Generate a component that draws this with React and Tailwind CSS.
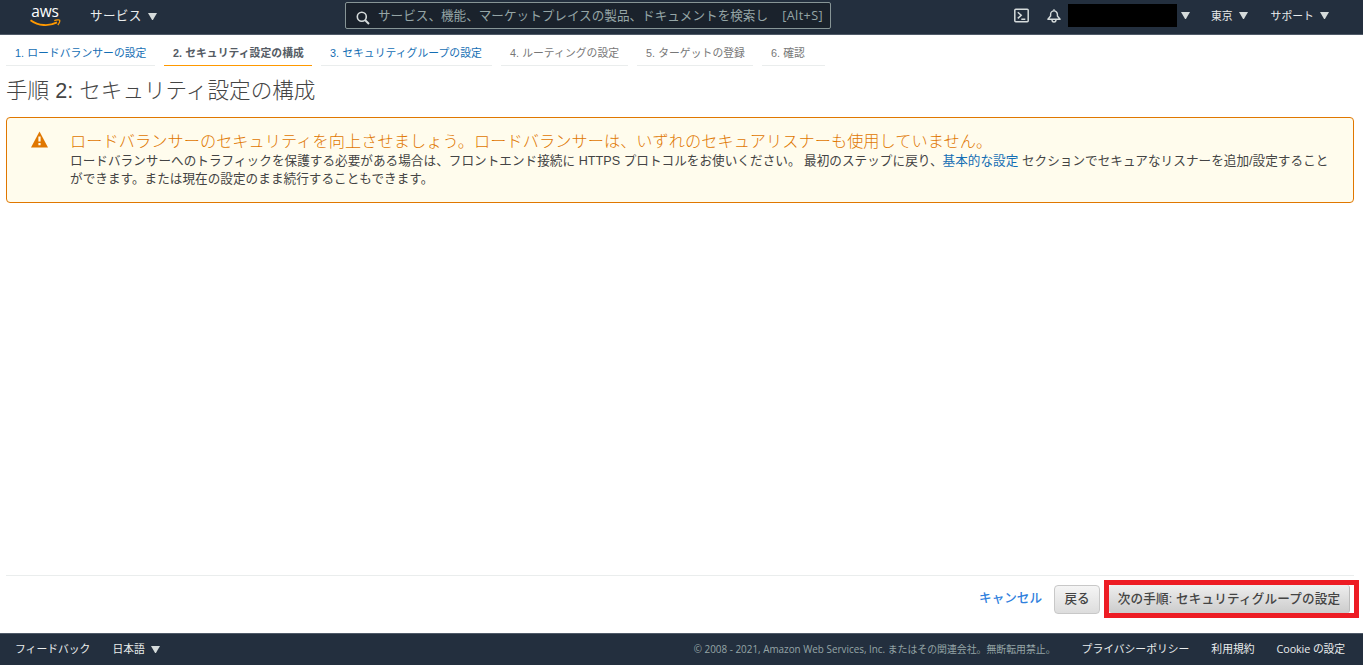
import React from "react";

const steps = [
  { label: "1. ロードバランサーの設定", state: "link", width: "w-[149px]" },
  { label: "2. セキュリティ設定の構成", state: "active", width: "w-[148px]" },
  { label: "3. セキュリティグループの設定", state: "link", width: "w-[171px]" },
  { label: "4. ルーティングの設定", state: "todo", width: "w-[127px]" },
  { label: "5. ターゲットの登録", state: "todo", width: "w-[116px]" },
  { label: "6. 確認", state: "todo", width: "w-[63px]" },
];

const stepStyles = {
  link: "border-[#eaeded] text-[#146eb4]",
  active: "border-[#f90] font-bold text-[#545b64]",
  todo: "border-[#eaeded] text-[#777]",
};

function Caret({ className = "" }) {
  return (
    <svg className={`h-[7px] w-[9px] shrink-0 ${className}`} viewBox="0 0 9 7" fill="#d5dbdb">
      <path d="M0 0h9L4.9 7h-.8z" />
    </svg>
  );
}

function AwsLogo() {
  return (
    <div className="flex w-[30px] flex-col items-center">
      <span className="h-[15px] font-['Open_Sans',sans-serif] text-[15.5px] leading-[12px] font-medium tracking-[-0.1px] text-white">
        aws
      </span>
      <svg className="-mt-px h-[8px] w-[31px] shrink-0" viewBox="0 0 31 8" fill="none">
        <path d="M0.5 1.2C8.5 7 19 7.5 27 3.4" stroke="#f90" strokeWidth="1.8" />
        <path d="M24.3 1.6c2-1 5-1 5.4-.4.4.8-.4 3.4-1.9 4.8" stroke="#f90" strokeWidth="1.3" />
      </svg>
    </div>
  );
}

function Header() {
  return (
    <header className="flex h-[35px] shrink-0 items-start border-b border-[#4f5a68] bg-[#232f3e] font-['Open_Sans','Noto_Sans_CJK_JP',sans-serif] text-[12.6px] text-[#eaeded]">
      <div className="flex h-[31px] w-[345px] items-center pl-[30px]">
        <AwsLogo />
        <span className="mt-px ml-[30px] tracking-[0.3px]">サービス</span>
        <Caret className="mt-px ml-[6px]" />
      </div>

      {/* Search */}
      <div className="mt-0.5 flex h-[27px] w-[486px] items-center rounded-[2px] border border-[#879596] bg-[#1a222c] pr-[7px] pl-[10px] text-[#95a5a6]">
        <svg className="mt-1 h-[14px] w-[14px] shrink-0" viewBox="0 0 14 14" fill="none" stroke="#d5dbdb" strokeWidth="1.6">
          <circle cx="5.8" cy="5.8" r="4.5" />
          <path d="M9 9l4 4" strokeWidth="2" />
        </svg>
        <span className="mt-px ml-[8px] w-[392px] overflow-hidden whitespace-nowrap">
          サービス、機能、マーケットプレイスの製品、ドキュメントを検索し
        </span>
        <span className="mt-px ml-auto tracking-[0.4px] whitespace-nowrap">[Alt+S]</span>
      </div>

      <div className="flex h-[31px] flex-1 items-center pl-[183px] text-[10.8px]">
        <svg className="h-[15px] w-[15px] shrink-0" viewBox="0 0 15 15" fill="none" stroke="#d5dbdb" strokeWidth="1.5">
          <rect x="0.8" y="1.3" width="13.4" height="12.4" rx="1" />
          <path d="M3.8 4.2l3.4 3-3.4 3.2M7.3 11.2h4" />
        </svg>
        <svg className="ml-[18px] h-[14px] w-[14px] shrink-0" viewBox="0 0 14 14" fill="none" stroke="#d5dbdb" strokeWidth="1.4">
          <path d="M7 .3v1.6M.9 10.2h12.2L10.400 7V5.400a3.400 3.500 0 0 0-6.800 0V7z" strokeLinejoin="round" />
          <path d="M5 10.700a2 2.300 0 0 0 4 0" />
        </svg>
        <div className="ml-[7px] h-[23px] w-[109px] bg-black" />
        <Caret className="ml-[4px]" />
        <span className="ml-[21px] pt-px">東京</span>
        <Caret className="ml-[6px]" />
        <span className="ml-[23px] pt-px">サポート</span>
        <Caret className="ml-[6px]" />
      </div>
    </header>
  );
}

function StepTabs() {
  return (
    <nav className="flex h-[31px] gap-[9px] pl-[6px] text-[10.8px]">
      {steps.map((step) => (
        <div
          key={step.label}
          className={`h-[31px] border-b pl-[9px] leading-[36px] tracking-[0.05px] whitespace-nowrap ${step.width} ${stepStyles[step.state]}`}
        >
          {step.label}
        </div>
      ))}
    </nav>
  );
}

function SecurityAlert() {
  return (
    <div className="mt-[11px] mr-[9px] ml-[6px] flex h-[86px] rounded-[4px] border border-[#e07700] bg-[#fffced] pt-[13px] pl-[24px]">
      <svg className="h-[17px] w-[17px] shrink-0" viewBox="0 0 17 17" fill="#e07700">
        <path d="M8.5.5L17 16.5H0z" />
        <path d="M7.4 5.5h2.200v5H7.400zM7.400 12h2.200v2.200H7.400z" fill="#fffced" />
      </svg>
      <div className="ml-[22px] w-[1268px]">
        <h2 className="text-[16.2px] leading-[20px] font-light tracking-[0.05px] text-[#e07700]">
          ロードバランサーのセキュリティを向上させましょう。ロードバランサーは、いずれのセキュアリスナーも使用していません。
        </h2>
        <p className="pt-px text-[12.6px] leading-[18px] tracking-[0.04px] text-[#444]">
          ロードバランサーへのトラフィックを保護する必要がある場合は、フロントエンド接続に HTTPS プロトコルをお使いください。 最初のステップに戻り、
          <a className="text-[#146eb4]">基本的な設定</a> セクションでセキュアなリスナーを追加/設定することができます。または現在の設定のまま続行することもできます。
        </p>
      </div>
    </div>
  );
}

function Actions() {
  return (
    <div className="mr-[9px] ml-[6px] flex h-[58px] items-start justify-end border-t border-[#eaeded] text-[12.6px] font-medium text-[#444]">
      <a className="mt-[9px] mr-[12px] leading-[27px] text-[#2f80dd]">キャンセル</a>
      <button className="mt-[9px] h-[29px] w-[46px] rounded-[4px] border border-[#c8c8c8] bg-linear-to-b from-[#f5f5f5] to-[#dddddd] pb-px leading-[25px]">
        戻る
      </button>
      {/* Highlighted primary action */}
      <div className="mt-[4px] -mr-[5px] ml-[4px] flex h-[38px] w-[255px] border-[5px] border-[#ed1c24]">
        <button className="h-[28px] w-[241px] rounded-[3px] border-r border-[#bbb] bg-linear-to-b from-[#eeeeee] to-[#cccccc] pb-px leading-[26px] tracking-[0.15px] whitespace-nowrap">
          次の手順: セキュリティグループの設定
        </button>
      </div>
    </div>
  );
}

function Footer() {
  return (
    <footer className="flex h-[32px] shrink-0 items-center border-t border-[#4f5a68] bg-[#232f3e] pr-[18px] pl-[15px] font-['Open_Sans','Noto_Sans_CJK_JP',sans-serif] text-[10.8px] whitespace-nowrap text-[#eaeded]">
      <span>フィードバック</span>
      <span className="ml-[22px]">日本語</span>
      <Caret className="ml-[6px]" />
      <span className="ml-auto text-[9.9px] text-[#95a5a6]">
        © 2008 - 2021, Amazon Web Services, Inc. またはその関連会社。無断転用禁止。
      </span>
      <span className="ml-[26px]">プライバシーポリシー</span>
      <span className="ml-[22px]">利用規約</span>
      <span className="ml-[22px] tracking-[-0.1px]">Cookie の設定</span>
    </footer>
  );
}

export default function App() {
  return (
    <div className="flex h-[665px] w-[1363px] flex-col overflow-hidden bg-white font-['Liberation_Sans','Noto_Sans_CJK_JP',sans-serif]">
      <Header />
      <main className="flex flex-1 flex-col">
        <StepTabs />
        <h1 className="mt-[10px] mb-px pl-[6px] text-[21.6px] leading-[29px] font-light text-[#444]">
          手順 2: セキュリティ設定の構成
        </h1>
        <SecurityAlert />
        <div className="flex-1" />
        <Actions />
      </main>
      <Footer />
    </div>
  );
}
